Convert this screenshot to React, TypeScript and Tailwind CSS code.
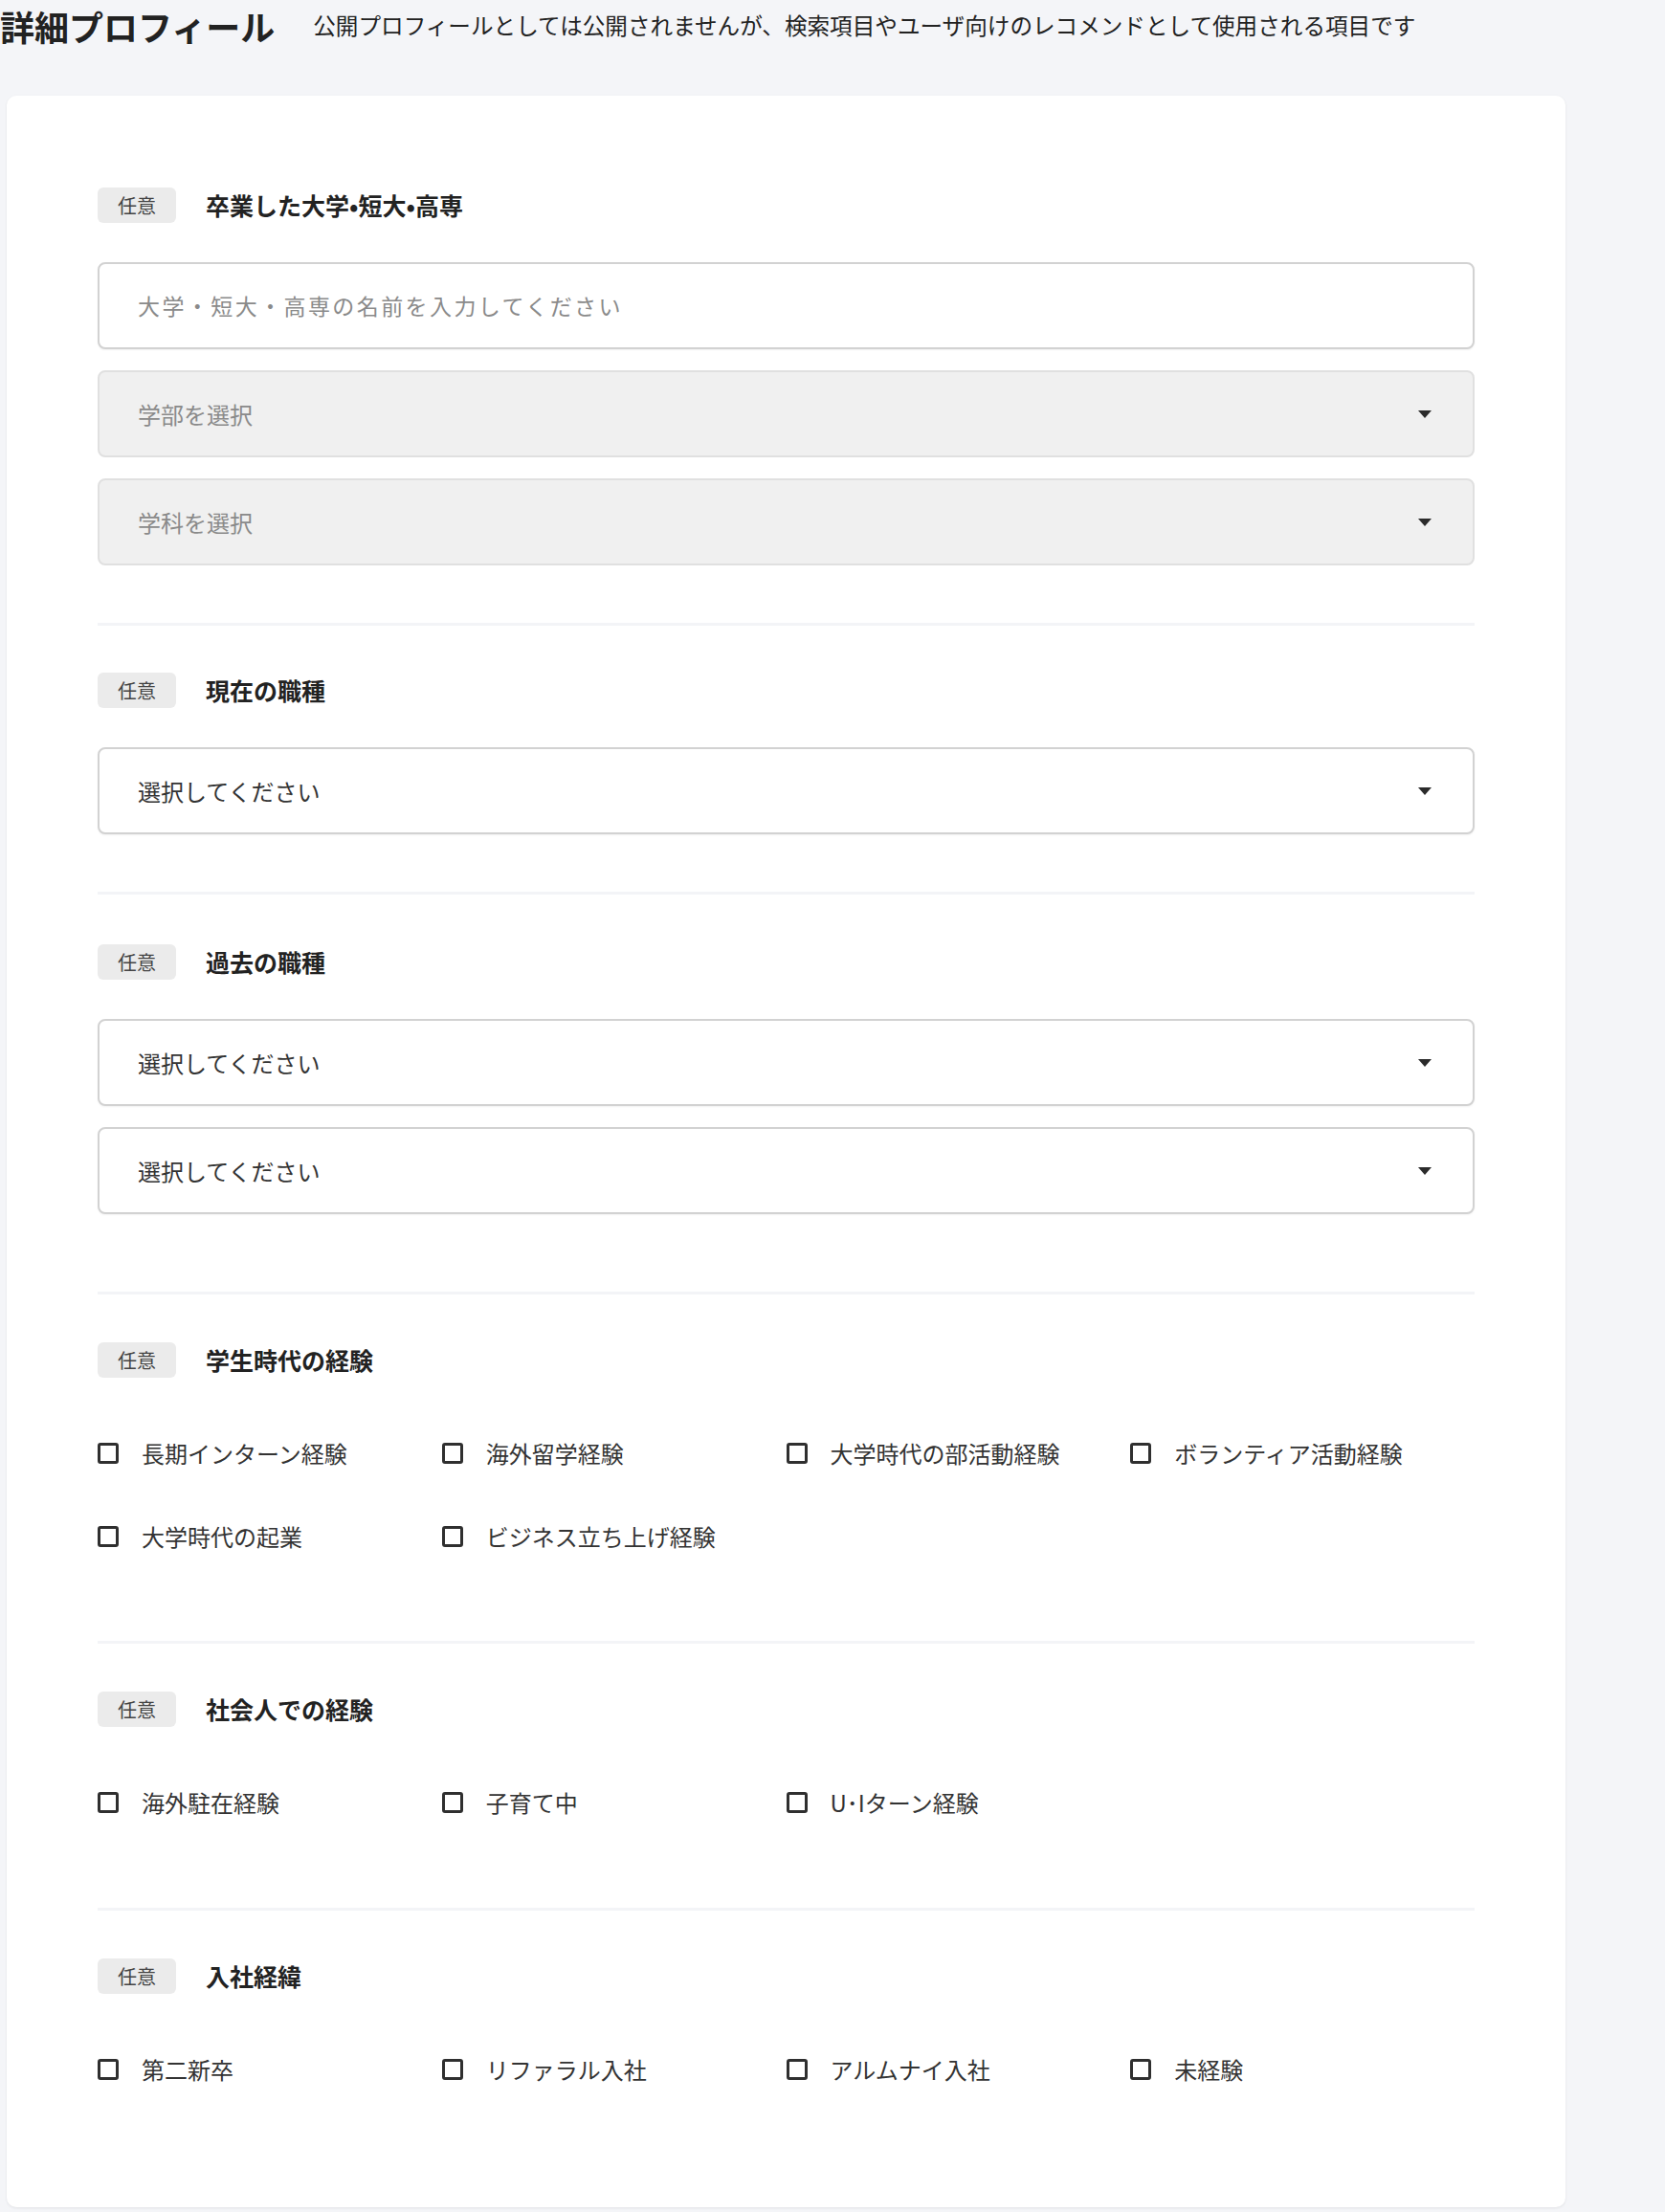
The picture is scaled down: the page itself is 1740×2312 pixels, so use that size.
import type { ReactNode } from 'react';

const font = { fontFamily: '"Noto Sans CJK JP", "Noto Sans", sans-serif' };

function Badge() {
  return (
    <span className="inline-flex h-[37px] items-center rounded-[6px] bg-[#ebebeb] px-[21px] text-[20px] leading-none text-[#444]">
      任意
    </span>
  );
}

function Caret() {
  return (
    <svg width="14" height="8" viewBox="0 0 14 8" className="shrink-0">
      <path d="M0 0h14L7 8z" fill="#2b2b2b" />
    </svg>
  );
}

function TextInput({ placeholder }: { placeholder: string }) {
  return (
    <div className="flex h-[91px] items-center rounded-[8px] border-2 border-[#d2d2d2] bg-white pl-[40px] shadow-[0_1px_2px_rgba(0,0,0,0.06)]">
      <span className="text-[23px] tracking-[0.105em] text-[#8a8a8a]">{placeholder}</span>
    </div>
  );
}

function Select({ label, disabled }: { label: string; disabled?: boolean }) {
  return (
    <div
      className={
        disabled
          ? 'flex h-[91px] items-center justify-between rounded-[8px] border-2 border-[#e0e0e0] bg-[#f0f0f0] pr-[43px] pl-[40px]'
          : 'flex h-[91px] items-center justify-between rounded-[8px] border-2 border-[#d2d2d2] bg-white pr-[43px] pl-[40px] shadow-[0_1px_2px_rgba(0,0,0,0.06)]'
      }
    >
      <span className={disabled ? 'text-[24px] text-[#8a8a8a]' : 'text-[24px] text-[#333]'}>{label}</span>
      <Caret />
    </div>
  );
}

function Check({ label }: { label: string }) {
  return (
    <label className="flex h-[36px] items-center gap-[24px]">
      <span className="h-[22px] w-[22px] shrink-0 rounded-[3px] border-[3px] border-[#2f2f2f]" />
      <span className="text-[24px] text-[#333]">{label}</span>
    </label>
  );
}

function Section({ title, className, body }: { title: string; className: string; body: ReactNode }) {
  return (
    <section className={className}>
      <div className="flex h-[37px] items-center gap-[31px]">
        <Badge />
        <h2 className="text-[25px] leading-none font-bold text-[#222]">{title}</h2>
      </div>
      {body}
    </section>
  );
}

function CheckGrid({ items }: { items: string[] }) {
  return (
    <div className="mt-[61px] grid grid-cols-4 gap-y-[51px]">
      {items.map((item) => (
        <Check key={item} label={item} />
      ))}
    </div>
  );
}

export default function App() {
  return (
    <div className="min-h-[2312px] bg-[#f4f5f8]" style={font}>
      <header className="flex h-[54px] items-center">
        <h1 className="text-[36px] leading-none font-bold text-[#222]">詳細プロフィール</h1>
        <p className="ml-[40px] text-[23.6px] text-[#222]">
          公開プロフィールとしては公開されませんが、検索項目やユーザ向けのレコメンドとして使用される項目です
        </p>
      </header>

      <main className="mt-[46px] ml-[7px] w-[1629px] rounded-[10px] bg-white px-[95px] pt-[96px] pb-[96px] shadow-[0_1px_3px_rgba(0,0,0,0.08)]">
        <Section
          title="卒業した大学•短大•高専"
          className="border-b-[3px] border-[#f3f4f7] pb-[60px]"
          body={
            <div className="mt-[41px] flex flex-col gap-[22px]">
              <TextInput placeholder="大学・短大・高専の名前を入力してください" />
              <Select label="学部を選択" disabled />
              <Select label="学科を選択" disabled />
            </div>
          }
        />

        <Section
          title="現在の職種"
          className="border-b-[3px] border-[#f3f4f7] pt-[49px] pb-[60px]"
          body={
            <div className="mt-[41px] flex flex-col gap-[22px]">
              <Select label="選択してください" />
            </div>
          }
        />

        <Section
          title="過去の職種"
          className="border-b-[3px] border-[#f3f4f7] pt-[52px] pb-[81px]"
          body={
            <div className="mt-[41px] flex flex-col gap-[22px]">
              <Select label="選択してください" />
              <Select label="選択してください" />
            </div>
          }
        />

        <Section
          title="学生時代の経験"
          className="border-b-[3px] border-[#f3f4f7] pt-[50px] pb-[91px]"
          body={
            <CheckGrid
              items={[
                '長期インターン経験',
                '海外留学経験',
                '大学時代の部活動経験',
                'ボランティア活動経験',
                '大学時代の起業',
                'ビジネス立ち上げ経験',
              ]}
            />
          }
        />

        <Section
          title="社会人での経験"
          className="border-b-[3px] border-[#f3f4f7] pt-[50px] pb-[92px]"
          body={<CheckGrid items={['海外駐在経験', '子育て中', 'U･Iターン経験']} />}
        />

        <Section
          title="入社経緯"
          className="pt-[50px] pb-[30px]"
          body={<CheckGrid items={['第二新卒', 'リファラル入社', 'アルムナイ入社', '未経験']} />}
        />
      </main>
    </div>
  );
}
